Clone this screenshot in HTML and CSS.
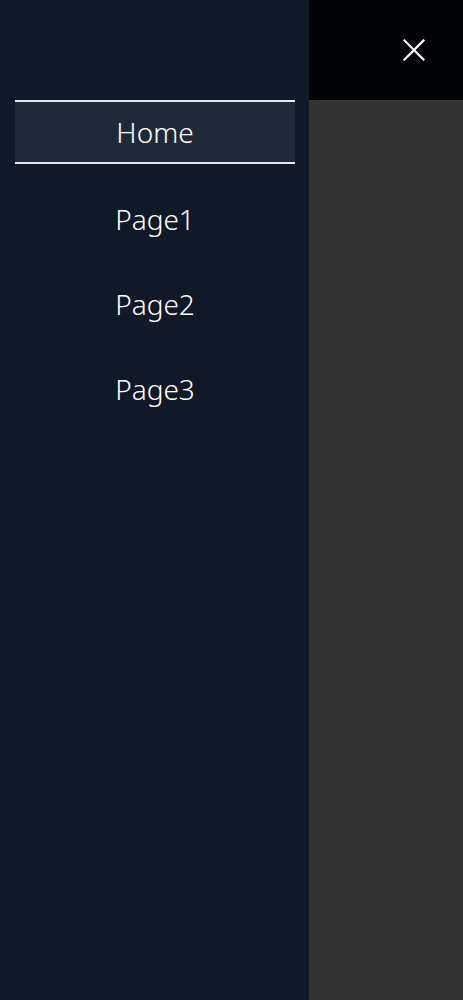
FILE: index.html
```html
<!DOCTYPE html>
<html lang="en">
<head>
<meta charset="utf-8">
<title>Menu</title>
<link rel="stylesheet" href="styles.css">
</head>
<body>
<div class="layout">
  <nav class="sidebar">
    <ul class="menu">
      <li class="menu-item active">Home</li>
      <li class="menu-item">Page1</li>
      <li class="menu-item">Page2</li>
      <li class="menu-item">Page3</li>
    </ul>
  </nav>
  <div class="main">
    <header class="topbar">
      <button class="close" aria-label="Close">
        <svg width="22" height="22" viewBox="0 0 22 22" fill="none" stroke="#ffffff" stroke-width="2.2" stroke-linecap="square">
          <line x1="1.5" y1="1.5" x2="20.5" y2="20.5"/>
          <line x1="20.5" y1="1.5" x2="1.5" y2="20.5"/>
        </svg>
      </button>
    </header>
    <div class="content"></div>
  </div>
</div>
</body>
</html>
```
FILE: styles.css
```css
html, body {
  margin: 0;
  padding: 0;
}
body {
  font-family: "Noto Sans", "DejaVu Sans", sans-serif;
  background: #333333;
}
.layout {
  display: flex;
  width: 463px;
  height: 1000px;
}
.sidebar {
  width: 309px;
  flex: none;
  background: #111827;
  padding-top: 100px;
  box-sizing: border-box;
}
.menu {
  list-style: none;
  margin: 0 14px 0 15px;
  padding: 0;
  display: flex;
  flex-direction: column;
  gap: 25px;
}
.menu-item {
  height: 60px;
  display: flex;
  align-items: center;
  justify-content: center;
  color: #ffffff;
  font-size: 28px;
  font-weight: 300;
  line-height: 1;
}
.menu-item.active {
  background: #1f2937;
  border-top: 2px solid #e5e7eb;
  border-bottom: 2px solid #e5e7eb;
}
.main {
  flex: 1;
  display: flex;
  flex-direction: column;
}
.topbar {
  height: 100px;
  background: #020307;
  display: flex;
  align-items: center;
  justify-content: flex-end;
  padding-right: 38px;
}
.close {
  background: none;
  border: 0;
  padding: 0;
  width: 22px;
  height: 22px;
  display: block;
  cursor: pointer;
}
.close svg {
  display: block;
}
.content {
  flex: 1;
  background: #333333;
}
```
